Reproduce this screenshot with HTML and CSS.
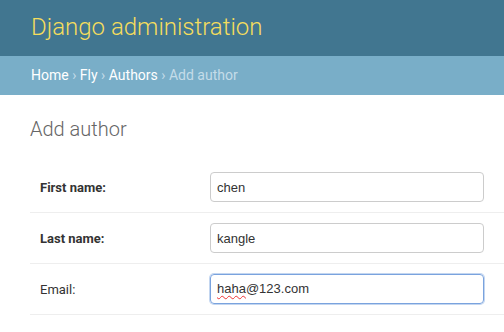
FILE: index.html
```html
<!DOCTYPE html>
<html lang="en">
<head>
    <meta charset="UTF-8">
    <title>Add author | Django site admin</title>
    <link rel="stylesheet" href="styles.css">
</head>
<body>

    <div class="header">
        <h1 class="branding">Django administration</h1>
    </div>

    <div class="breadcrumbs">
        <a href="#">Home</a> &rsaquo; <a href="#">Fly</a> &rsaquo; <a href="#">Authors</a> &rsaquo; Add author
    </div>

    <div class="content">
        <h2 class="title">Add author</h2>

        <form class="form">
            <div class="form-row">
                <label for="id_first_name" class="required">First name:</label>
                <input type="text" id="id_first_name" class="input" value="chen">
            </div>
            <div class="form-row">
                <label for="id_last_name" class="required">Last name:</label>
                <input type="text" id="id_last_name" class="input" value="kangle">
            </div>
            <div class="form-row">
                <label>Email:</label>
                <div class="input focused"><span class="typo">haha</span>@123.com</div>
            </div>
        </form>
    </div>

</body>
</html>
```

FILE: styles.css
```css
body {
  margin: 0;
  background: #fff;
  font-family: Roboto, "Liberation Sans", Arial, sans-serif;
  color: #333;
}

.header {
  background: #417690;
  height: 56px;
  padding: 0 31px;
  display: flex;
  align-items: center;
}

.branding {
  margin: 0;
  font-size: 24px;
  font-weight: 300;
  color: #f5dd5d;
  line-height: 28px;
  padding-bottom: 3px;
}

.breadcrumbs {
  background: #79aec8;
  height: 39px;
  line-height: 39px;
  padding: 0 31px;
  font-size: 14px;
  color: #c4dce8;
}

.breadcrumbs a {
  color: #fff;
  text-decoration: none;
}

.content {
  padding: 22px 0 0 30px;
}

.title {
  margin: 0 0 21px;
  font-size: 20px;
  line-height: 24px;
  font-weight: 300;
  color: #666;
}

.form {
  margin: 0;
}

.form-row {
  display: flex;
  align-items: center;
  padding: 10px;
  border-bottom: 1px solid #eee;
}

.form-row label {
  width: 170px;
  font-size: 13px;
  font-weight: normal;
  color: #333;
}

.form-row label.required {
  font-weight: bold;
}

.input {
  box-sizing: border-box;
  width: 274px;
  height: 30px;
  margin: 0;
  padding: 0 6px;
  border: 1px solid #ccc;
  border-radius: 4px;
  font-family: "Liberation Sans", Arial, sans-serif;
  font-size: 13px;
  color: #333;
  line-height: 28px;
  outline: none;
}

.focused {
  border-color: #7aa3de;
  box-shadow: 0 0 0 1px rgba(122, 163, 222, 0.45);
}

.typo {
  text-decoration: underline wavy #e33;
  text-decoration-thickness: 1px;
  text-underline-offset: 2px;
}
```
